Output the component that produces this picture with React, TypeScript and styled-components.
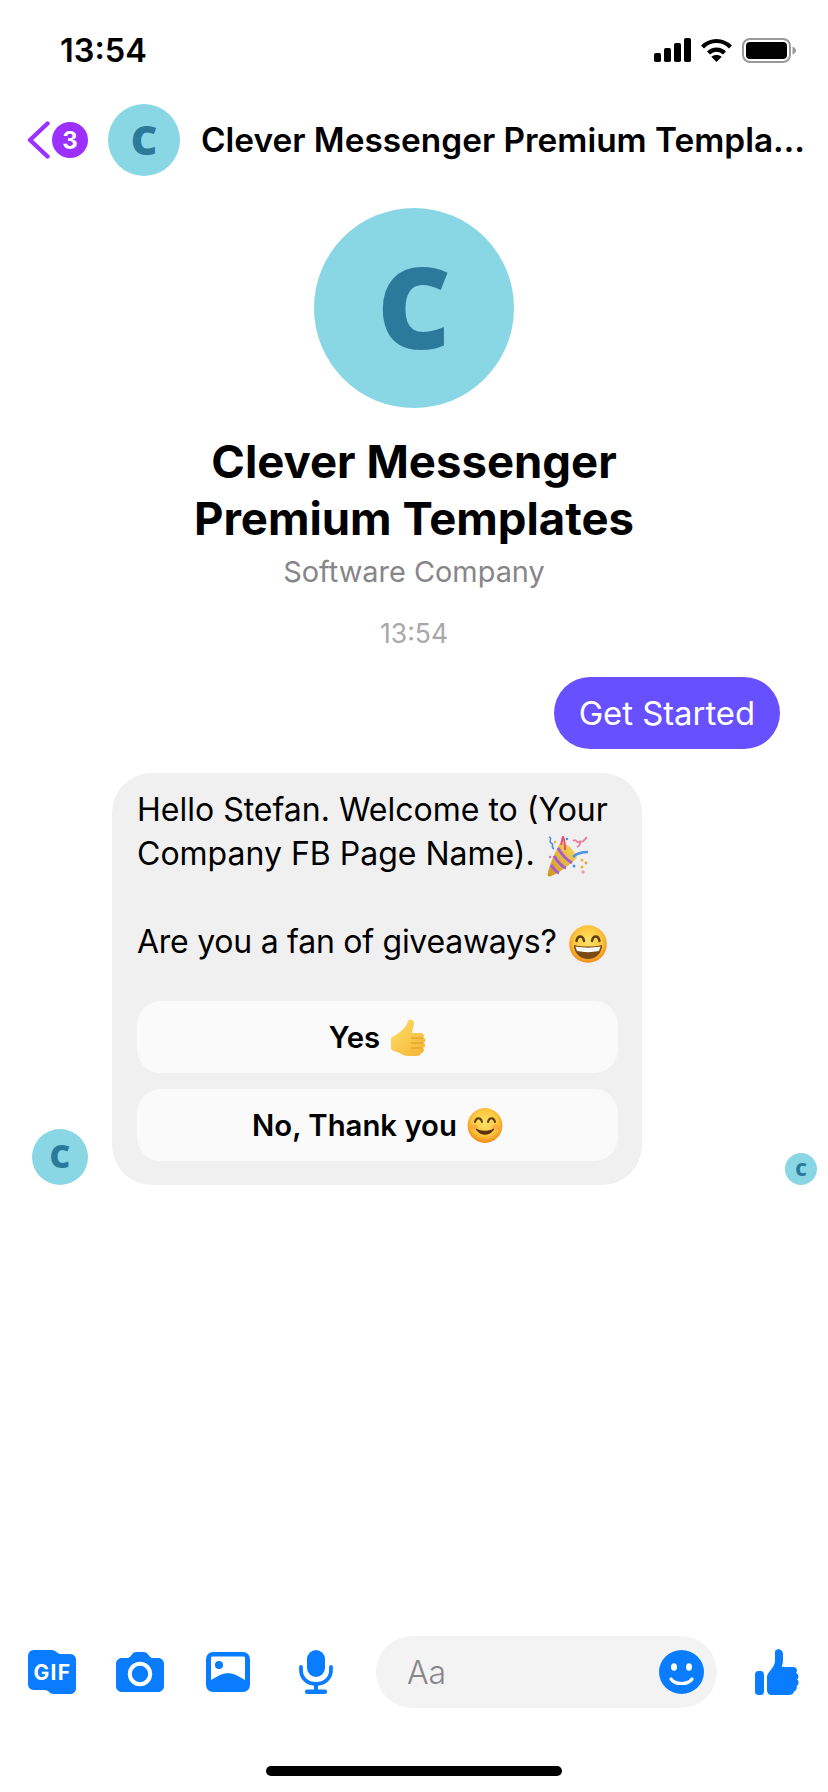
import React from "react";
import styled, { createGlobalStyle } from "styled-components";

const Global = createGlobalStyle`
  html, body { margin: 0; padding: 0; background: #fff; }
  * { box-sizing: border-box; }
`;

const Page = styled.div`
  width: 828px;
  height: 1792px;
  display: flex;
  flex-direction: column;
  background: #fff;
  color: #000;
  font-family: Inter, "Liberation Sans", sans-serif;
  overflow: hidden;
`;

const StatusBar = styled.div`
  height: 100px;
  flex: none;
  display: flex;
  align-items: center;
  padding: 0 32px 0 60px;
`;
const Clock = styled.div`
  font-size: 32.5px;
  font-weight: 600;
  flex: 1;
`;
const StatusIcons = styled.div`
  display: flex;
  align-items: center;
  gap: 9px;
`;

const NavBar = styled.div`
  height: 80px;
  flex: none;
  display: flex;
  align-items: center;
  padding-left: 27px;
`;
const Badge = styled.div`
  width: 36px;
  height: 36px;
  margin-left: 2px;
  border-radius: 50%;
  background: #9b30ff;
  color: #fff;
  font-size: 24px;
  font-weight: 700;
  display: flex;
  align-items: center;
  justify-content: center;
`;
const Avatar = styled.div<{ $size: number }>`
  width: ${(p) => p.$size}px;
  height: ${(p) => p.$size}px;
  flex: none;
  border-radius: 50%;
  background: #89d7e5;
  color: #2b7a9b;
  font-family: "Open Sans", sans-serif;
  font-weight: 800;
  font-size: ${(p) => Math.round(p.$size * 0.57)}px;
  line-height: 1;
  padding-bottom: ${(p) => Math.round(p.$size * 0.03)}px;
  display: flex;
  align-items: center;
  justify-content: center;
`;
const NavAvatar = styled(Avatar)`
  margin-left: 20px;
`;
const NavTitle = styled.div`
  margin-left: 21px;
  width: 606px;
  font-size: 33.4px;
  font-weight: 600;
  white-space: nowrap;
  overflow: hidden;
  text-overflow: ellipsis;
`;

const Thread = styled.div`
  flex: 1;
  display: flex;
  flex-direction: column;
`;
const Profile = styled.div`
  display: flex;
  flex-direction: column;
  align-items: center;
  padding-top: 28px;
`;
const Name = styled.div`
  margin-top: 25px;
  font-size: 45.5px;
  line-height: 57px;
  font-weight: 700;
  text-align: center;
`;
const Category = styled.div`
  margin-top: 7px;
  font-size: 28.9px;
  line-height: 36px;
  color: #86868a;
`;
const Stamp = styled.div`
  margin-top: 28px;
  font-size: 26.5px;
  line-height: 30px;
  color: #a8a8aa;
  text-align: center;
`;
const OutRow = styled.div`
  margin-top: 29px;
  display: flex;
  justify-content: flex-end;
  padding-right: 48px;
`;
const OutBubble = styled.div`
  height: 72px;
  padding: 0 25px;
  border-radius: 36px;
  background: #6750ff;
  color: #fff;
  font-size: 32.8px;
  display: flex;
  align-items: center;
`;
const InRow = styled.div`
  margin-top: 24px;
  display: flex;
  align-items: flex-end;
  padding: 0 11px 0 32px;
`;
const InBubble = styled.div`
  margin-left: 24px;
  width: 530px;
  padding: 15px 24px 24px 25px;
  border-radius: 40px;
  background: #f0f0f0;
`;
const Seen = styled(Avatar)`
  margin-left: auto;
`;
const MessageText = styled.div`
  font-size: 32px;
  line-height: 44px;
  height: 176px;
`;
const TightLine = styled.span`
  letter-spacing: -0.26px;
`;
const Inline = styled.span<{ $gap?: number }>`
  display: inline-flex;
  height: 30px;
  align-items: center;
  vertical-align: middle;
  margin-left: ${(p) => p.$gap ?? 10}px;
`;
const Choices = styled.div`
  margin-top: 37px;
  display: flex;
  flex-direction: column;
  gap: 16px;
`;
const Choice = styled.div`
  height: 72px;
  border-radius: 24px;
  background: #fafafa;
  font-size: 29.3px;
  font-weight: 600;
  display: flex;
  align-items: center;
  justify-content: center;
`;

const Composer = styled.div`
  height: 72px;
  flex: none;
  display: flex;
  align-items: center;
  padding-left: 8px;
`;
const IconSlot = styled.div`
  width: 88px;
  flex: none;
  display: flex;
  justify-content: center;
`;
const Field = styled.div`
  width: 341px;
  height: 72px;
  margin: 0 16px;
  flex: none;
  border-radius: 36px;
  background: #f3f3f3;
  display: flex;
  align-items: center;
  justify-content: space-between;
  padding: 0 13px 0 31px;
  color: #86868a;
  font-size: 32px;
  font-weight: 300;
`;
const HomeArea = styled.div`
  height: 84px;
  flex: none;
  display: flex;
  justify-content: center;
  padding-top: 58px;
`;
const HomeBar = styled.div`
  width: 296px;
  height: 10px;
  border-radius: 5px;
  background: #000;
`;

const BLUE = "#0a7cff";

const Signal = () => (
  <svg width="37" height="24" viewBox="0 0 37 24" fill="#000">
    <rect x="0" y="15" width="7" height="9" rx="1.8" />
    <rect x="10" y="10" width="7" height="14" rx="1.8" />
    <rect x="20" y="5" width="7" height="19" rx="1.8" />
    <rect x="30" y="0" width="7" height="24" rx="1.8" />
  </svg>
);
const Wifi = () => (
  <svg width="33" height="24" viewBox="0 0 32 24" fill="none" stroke="#000" strokeWidth="4.2">
    <path d="M2 9 C10 1 22 1 30 9" />
    <path d="M8 15 C12.5 10.5 19.5 10.5 24 15" />
    <path d="M16 24 L10.8 18.8 C13.5 16.4 18.5 16.4 21.2 18.8 Z" fill="#000" stroke="none" />
  </svg>
);
const Battery = () => (
  <svg width="54" height="25" viewBox="0 0 54 25">
    <rect x="1" y="1" width="47" height="23" rx="7" fill="none" stroke="#9a9a9a" strokeWidth="2" />
    <rect x="4" y="4" width="41" height="17" rx="4" fill="#000" />
    <path d="M50.5 8.5 C52.8 9.3 54 10.8 54 12.5 C54 14.2 52.8 15.7 50.5 16.5 Z" fill="#9a9a9a" />
  </svg>
);
const Chevron = () => (
  <svg width="23" height="38" viewBox="0 0 23 38" fill="none" stroke="#9b30ff" strokeWidth="4.4" strokeLinecap="round" strokeLinejoin="round">
    <path d="M20.5 2.5 L3 19 L20.5 35.5" />
  </svg>
);

const GifIcon = () => (
  <svg width="48" height="44" viewBox="0 0 48 44">
    <path fill={BLUE} d="M6 0 H24 C28 0 29 4 33 4 H42 C46 4 48 7 48 10 V38 C48 42 45 44 42 44 H26 C21 44 21 40 17 40 H6 C2 40 0 37 0 34 V6 C0 3 2 0 6 0 Z" />
    <text x="24.500" y="30" textAnchor="middle" fill="#fff" fontFamily="Inter, sans-serif" fontWeight="700" fontSize="21" letterSpacing="1.4">GIF</text>
  </svg>
);
const CameraIcon = () => (
  <svg width="48" height="40" viewBox="0 0 48 40">
    <path fill={BLUE} d="M6 6 H11 C13.5 6 14.5 4.5 15.5 3 C16.8 1 18 0 20.5 0 H27.5 C30 0 31.2 1 32.5 3 C33.5 4.5 34.5 6 37 6 H42 C45.5 6 48 8.5 48 12 V34 C48 37.5 45.5 40 42 40 H6 C2.5 40 0 37.5 0 34 V12 C0 8.5 2.5 6 6 6 Z" />
    <circle cx="24" cy="22" r="10.2" fill="none" stroke="#fff" strokeWidth="4" />
  </svg>
);
const ImageIcon = () => (
  <svg width="44" height="40" viewBox="0 0 44 40">
    <rect width="44" height="40" rx="7" fill={BLUE} />
    <path fill="#fff" d="M5 6 C5 5 5.5 4.500 6.500 4.500 H37.500 C38.500 4.500 39 5 39 6 V28 L30 23 C25 20.500 19 20.500 14 23 L5 28 Z" />
    <circle cx="13" cy="13" r="4" fill={BLUE} />
  </svg>
);
const MicIcon = () => (
  <svg width="34" height="44" viewBox="0 0 34 44">
    <rect x="8" y="0" width="18" height="27" rx="9" fill={BLUE} />
    <path d="M2 17 V20 C2 28.500 8.500 34 17 34 C25.500 34 32 28.500 32 20 V17" fill="none" stroke={BLUE} strokeWidth="3.800" strokeLinecap="round" />
    <rect x="15" y="33" width="4" height="8" fill={BLUE} />
    <rect x="6" y="39.500" width="22" height="4.500" rx="2" fill={BLUE} />
  </svg>
);
const SmileIcon = () => (
  <svg width="45" height="44" viewBox="0 0 45 44">
    <ellipse cx="22.500" cy="22" rx="22.500" ry="22" fill={BLUE} />
    <ellipse cx="15" cy="17" rx="3" ry="3.800" fill="#fff" />
    <ellipse cx="30" cy="17" rx="3" ry="3.800" fill="#fff" />
    <path d="M12 29 C16 35 29 35 33 29" fill="none" stroke="#fff" strokeWidth="3.200" strokeLinecap="round" />
  </svg>
);
const LikeIcon = () => (
  <svg width="44" height="46" viewBox="0 0 44 46" fill={BLUE}>
    <rect x="0" y="22" width="9" height="24" rx="3.500" />
    <path d="M12 27 C14 21 20 19 20 11 V3 C20 -1 28 -1 28 5 V11 C28 14 27 16 27 18 H38 C42 18 43 22 41 24 C44 25 44 29 42 30.500 C44.500 32 44 36 41.500 37 C42.500 39 41 42 39 42.500 C38.500 45 36.500 46 34 46 H17 C14 46 12 44 12 41 Z" />
  </svg>
);

const Popper = () => (
  <svg width="42" height="41" viewBox="0 0 42 41">
    <defs>
      <linearGradient id="cone" x1="0" y1="1" x2="1" y2="0">
        <stop offset="0" stopColor="#d2931b" />
        <stop offset="1" stopColor="#f8dc62" />
      </linearGradient>
    </defs>
    <path d="M1 40 C-1 38 8 14 14 6 C21 8 29 16 30 22 C24 28 4 43 1 40 Z" fill="url(#cone)" />
    <path d="M4 29 C7 33 9 36 12 37" stroke="#a45ed0" strokeWidth="3" fill="none" />
    <path d="M7 20 C11 26 15 31 19 32" stroke="#a45ed0" strokeWidth="3" fill="none" />
    <path d="M11 12 C15 19 20 24 25 27" stroke="#a45ed0" strokeWidth="2.800" fill="none" />
    <path d="M14 9 C15 6 15 3 16 1 C17 3 18 7 18 14" stroke="#ea4f72" strokeWidth="2" fill="none" />
    <path d="M26 21 C30 17 35 16 41 16" stroke="#4b93ea" strokeWidth="2.600" fill="none" />
    <path d="M2 1 C6 2 1 5 4 7 C8 8 3 11 7 13" stroke="#4b8fe8" strokeWidth="1.600" fill="none" />
    <path d="M26 5 C30 2 29 8 32 6 C35 3 34 9 30 11 M35 6 C37 5 38 3 40 1" stroke="#ee7a9a" strokeWidth="1.800" fill="none" />
    <circle cx="35" cy="24" r="1.500" fill="#e9b83a" />
    <circle cx="27" cy="30" r="1.500" fill="#4b8fe8" />
    <circle cx="39" cy="27" r="1.400" fill="#e9a03a" />
    <circle cx="35" cy="31" r="1.600" fill="#e9b83a" />
    <circle cx="36" cy="36" r="1.700" fill="#ee9ab0" />
    <circle cx="20" cy="3" r="1.300" fill="#4b8fe8" />
    <circle cx="8" cy="6" r="1.300" fill="#e9b83a" />
    <circle cx="3" cy="21" r="1.300" fill="#ee7a9a" />
  </svg>
);
const FaceGradient = ({ id }: { id: string }) => (
  <defs>
    <radialGradient id={id} cx="0.5" cy="0.42" r="0.58">
      <stop offset="0" stopColor="#fde264" />
      <stop offset="0.65" stopColor="#fcc63f" />
      <stop offset="1" stopColor="#ef8a14" />
    </radialGradient>
  </defs>
);
const Grin = () => (
  <svg width="38" height="38" viewBox="0 0 38 38">
    <FaceGradient id="grin" />
    <circle cx="19" cy="19" r="18.800" fill="url(#grin)" />
    <path d="M7.500 16 C8.500 10 14 10 15 16" stroke="#5b3a14" strokeWidth="2.400" fill="none" strokeLinecap="round" />
    <path d="M23 16 C24 10 29.500 10 30.500 16" stroke="#5b3a14" strokeWidth="2.400" fill="none" strokeLinecap="round" />
    <path d="M5 20 C13 22 25 22 33 20 C33 28 27 34 19 34 C11 34 5 28 5 20 Z" fill="#7a4a12" />
    <path d="M6.500 21.500 C14 23 24 23 31.500 21.500 L30 26 C23 27.500 15 27.500 8 26 Z" fill="#fff" />
  </svg>
);
const Smiling = () => (
  <svg width="36" height="35" viewBox="0 0 36 35">
    <FaceGradient id="smiling" />
    <circle cx="18" cy="17.500" r="17.400" fill="url(#smiling)" />
    <ellipse cx="7" cy="19" rx="4" ry="2.600" fill="#f59a3c" opacity="0.55" />
    <ellipse cx="29" cy="19" rx="4" ry="2.600" fill="#f59a3c" opacity="0.55" />
    <path d="M8 14 C9 9 14 9 15 14" stroke="#5b3a14" strokeWidth="2" fill="none" strokeLinecap="round" />
    <path d="M21 14 C22 9 27 9 28 14" stroke="#5b3a14" strokeWidth="2" fill="none" strokeLinecap="round" />
    <path d="M9 21 C13 28 23 28 27 21 C22 24 14 24 9 21 Z" fill="#5a3213" stroke="#5a3213" strokeWidth="1" strokeLinejoin="round" />
  </svg>
);
const ThumbEmoji = () => (
  <svg width="36" height="37" viewBox="0 0 36 37">
    <defs>
      <linearGradient id="thumb" x1="0" y1="0" x2="1" y2="1">
        <stop offset="0" stopColor="#fde26a" />
        <stop offset="1" stopColor="#f6b233" />
      </linearGradient>
    </defs>
    <path d="M1 20 C1 17 8 16 12 11 C15 8 17 6 18 2 C19 -0.500 24 0 24 4 C24 8 22 11 22 14 H31 C34 14 35 18 33 18.500 C36 19 36 23 33.500 24 C36 25 35.500 28.500 33 29 C35 30 34 34 31 34 C31 36 29 37 26 37 H18 C13 37 11 34 7 33 C4 32.500 1 31 1 29 Z" fill="url(#thumb)" />
    <path d="M21 19 H33 M21 24 H33 M21 29 H32" stroke="#e09a2a" strokeWidth="1.100" fill="none" />
  </svg>
);

export default function App() {
  return (
    <Page>
      <Global />
      <StatusBar>
        <Clock>13:54</Clock>
        <StatusIcons>
          <Signal />
          <Wifi />
          <Battery />
        </StatusIcons>
      </StatusBar>
      <NavBar>
        <Chevron />
        <Badge>3</Badge>
        <NavAvatar $size={72}>C</NavAvatar>
        <NavTitle>Clever Messenger Premium Templates</NavTitle>
      </NavBar>
      <Thread>
        <Profile>
          <Avatar $size={200}>C</Avatar>
          <Name>
            Clever Messenger
            <br />
            Premium Templates
          </Name>
          <Category>Software Company</Category>
        </Profile>
        <Stamp>13:54</Stamp>
        <OutRow>
          <OutBubble>Get Started</OutBubble>
        </OutRow>
        <InRow>
          <Avatar $size={56}>C</Avatar>
          <InBubble>
            <MessageText>
              Hello Stefan. Welcome to (Your
              <br />
              Company FB Page Name).
              <Inline $gap={12}>
                <Popper />
              </Inline>
              <br />
              <br />
              <TightLine>Are you a fan of giveaways?</TightLine>
              <Inline $gap={12}>
                <Grin />
              </Inline>
            </MessageText>
            <Choices>
              <Choice>
                Yes
                <Inline>
                  <ThumbEmoji />
                </Inline>
              </Choice>
              <Choice>
                No, Thank you
                <Inline>
                  <Smiling />
                </Inline>
              </Choice>
            </Choices>
          </InBubble>
          <Seen $size={32}>C</Seen>
        </InRow>
      </Thread>
      <Composer>
        <IconSlot>
          <GifIcon />
        </IconSlot>
        <IconSlot>
          <CameraIcon />
        </IconSlot>
        <IconSlot>
          <ImageIcon />
        </IconSlot>
        <IconSlot>
          <MicIcon />
        </IconSlot>
        <Field>
          Aa
          <SmileIcon />
        </Field>
        <IconSlot>
          <LikeIcon />
        </IconSlot>
      </Composer>
      <HomeArea>
        <HomeBar />
      </HomeArea>
    </Page>
  );
}
